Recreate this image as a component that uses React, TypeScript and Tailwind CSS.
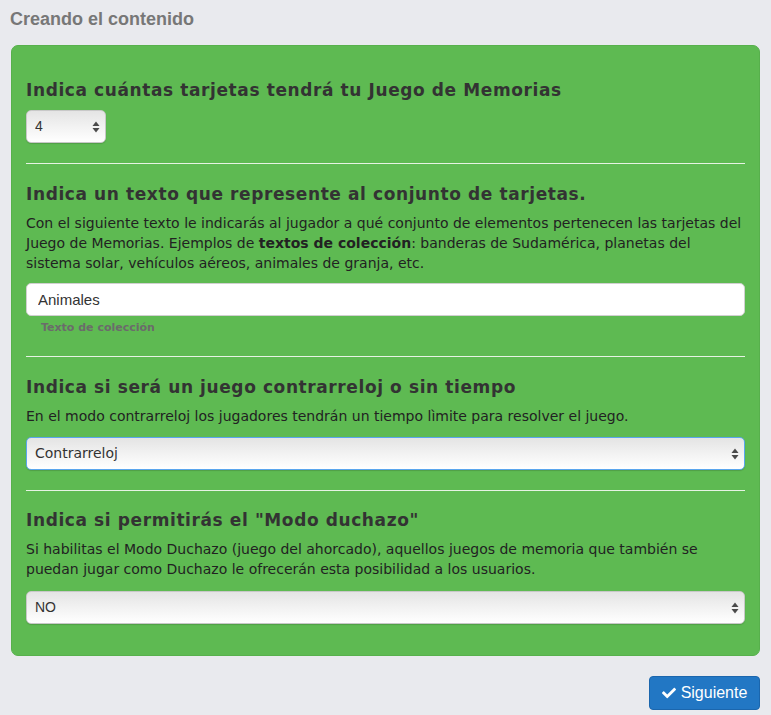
import React, { useState } from "react";
import { FaCheck } from "react-icons/fa";

// Small up/down arrows that Safari draws on a native select
const SelectArrows = () => (
  <svg
    className="pointer-events-none absolute right-[6px] top-1/2 -translate-y-1/2"
    width="8"
    height="12"
    viewBox="0 0 8 12"
  >
    <path d="M4 0.5 L7.5 5 L0.5 5 Z" fill="#4a4a4a" />
    <path d="M4 11.5 L7.5 7 L0.5 7 Z" fill="#4a4a4a" />
  </svg>
);

type SelectProps = {
  value: string;
  options: string[];
  onChange: (v: string) => void;
  focused?: boolean;
  className?: string;
  font?: string;
};

const FancySelect = ({ value, options, onChange, focused, className, font }: SelectProps) => (
  <div className={`relative ${className ?? ""}`}>
    <select
      value={value}
      onChange={(e) => onChange(e.target.value)}
      className={`block h-[33px] w-full appearance-none rounded-[5px] border bg-gradient-to-b from-[#e4e4e4] via-[#f2f2f2] to-white pl-[8px] pr-6 text-[14px] text-[#333] shadow-[0_1px_1px_rgba(0,0,0,0.15)] outline-none ${
        focused ? "border-[#5aa6ee]" : "border-[#c8c8c8]"
      }`}
      style={{ fontFamily: font ?? '"DejaVu Sans", Verdana, sans-serif' }}
    >
      {options.map((o) => (
        <option key={o} value={o}>
          {o}
        </option>
      ))}
    </select>
    <SelectArrows />
  </div>
);

const Heading = ({ children, className }: { children: React.ReactNode; className?: string }) => (
  <h3 className={`text-[17px] font-bold leading-[20px] tracking-[0.6px] text-[#333] ${className ?? ""}`}>
    {children}
  </h3>
);

const arial = '"Liberation Sans", Arial, sans-serif';

export default function App() {
  const [count, setCount] = useState("4");
  const [collection, setCollection] = useState("Animales");
  const [mode, setMode] = useState("Contrarreloj");
  const [duchazo, setDuchazo] = useState("NO");

  return (
    <div
      className="min-h-[715px] bg-[#e9eaee] px-[11px] pb-[6px]"
      style={{ fontFamily: '"DejaVu Sans", Verdana, sans-serif' }}
    >
      <h2 className="-ml-px pt-[8px] text-[18px] font-bold leading-[22px] text-[#777]" style={{ fontFamily: arial }}>
        Creando el contenido
      </h2>

      <div className="mt-[15px] rounded-[7px] border border-[#57b04c] bg-[#5eba52] px-[14px] pt-[34px] pb-[31px]">
        {/* cantidad de tarjetas */}
        <Heading>Indica cuántas tarjetas tendrá tu Juego de Memorias</Heading>
        <FancySelect
          className="mt-[10px] w-[80px]"
          value={count}
          options={["4", "6", "8", "10", "12"]}
          onChange={setCount}
          font={arial}
        />

        <hr className="mt-[20px] border-0 border-t border-[#e6f3e3]" />

        {/* texto de coleccion */}
        <Heading className="mt-[20px]">Indica un texto que represente al conjunto de tarjetas.</Heading>
        <p className="mt-[9px] text-[14px] leading-[20px] text-[#222]">
          Con el siguiente texto le indicarás al jugador a qué conjunto de elementos pertenecen las tarjetas del
          Juego de Memorias. Ejemplos de <b>textos de colección</b>: banderas de Sudamérica, planetas del sistema
          solar, vehículos aéreos, animales de granja, etc.
        </p>
        <input
          value={collection}
          onChange={(e) => setCollection(e.target.value)}
          className="mt-[10px] block h-[33px] w-full rounded-[5px] border border-[#d0d0d0] bg-white px-[11px] text-[15px] text-[#333] outline-none"
          style={{ fontFamily: arial }}
        />
        <p className="mt-[5px] pl-[15px] text-[11px] font-bold leading-[14px] text-[#6b6b6b]">Texto de colección</p>

        <hr className="mt-[21px] border-0 border-t border-[#e6f3e3]" />

        {/* modo de juego */}
        <Heading className="mt-[20px]">Indica si será un juego contrarreloj o sin tiempo</Heading>
        <p className="mt-[9px] text-[14px] leading-[20px] text-[#222]">
          En el modo contrarreloj los jugadores tendrán un tiempo lìmite para resolver el juego.
        </p>
        <FancySelect
          className="mt-[11px]"
          focused
          value={mode}
          options={["Contrarreloj", "Sin tiempo"]}
          onChange={setMode}
        />

        <hr className="mt-[20px] border-0 border-t border-[#e6f3e3]" />

        {/* modo duchazo */}
        <Heading className="mt-[19px]">Indica si permitirás el "Modo duchazo"</Heading>
        <p className="mt-[9px] text-[14px] leading-[20px] text-[#222]">
          Si habilitas el Modo Duchazo (juego del ahorcado), aquellos juegos de memoria que también se puedan jugar
          como Duchazo le ofrecerán esta posibilidad a los usuarios.
        </p>
        <FancySelect
          className="mt-[12px]"
          value={duchazo}
          options={["NO", "SI"]}
          onChange={setDuchazo}
          font={arial}
        />
      </div>

      <div className="mt-[20px] flex justify-end">
        <button
          className="flex h-[34px] w-[111px] items-center justify-center gap-[5px] rounded-[4px] border border-[#1b66ad] bg-[#2277c4] text-[16px] text-white"
          style={{ fontFamily: arial }}
        >
          <FaCheck className="text-[14px]" />
          Siguiente
        </button>
      </div>
    </div>
  );
}
